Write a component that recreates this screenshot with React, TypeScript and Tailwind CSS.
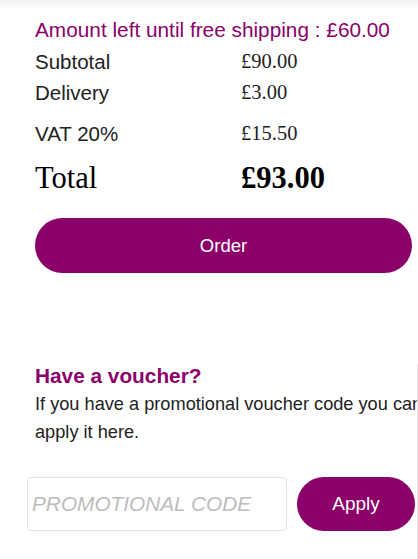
// App.tsx
// Basket summary with order button and voucher form
const rows = [
  { label: "Subtotal", value: "£90.00", extra: "mt-[2px]" },
  { label: "Delivery", value: "£3.00", extra: "" },
  { label: "VAT 20%", value: "£15.50", extra: "mt-[10px]" },
];

export default function App() {
  return (
    <div className="w-[418px] h-[559px] overflow-hidden bg-white font-['Liberation_Sans',Arial,sans-serif] text-[#222]">
      {/* faint shadow from the header above */}
      <div className="h-[10px] bg-gradient-to-b from-[#f2f2f2] to-white" />

      <div className="pl-[35px]">
        <div className="mt-[6px] text-[20.8px] leading-[28px] text-[#8b0069] whitespace-nowrap">
          Amount left until free shipping : £60.00
        </div>

        {rows.map((r) => (
          <div
            key={r.label}
            className={`grid grid-cols-[206px_1fr] h-[31px] leading-[31px] ${r.extra}`}
          >
            <span className="text-[20.5px]">{r.label}</span>
            <span className="font-['Liberation_Serif','Times_New_Roman',serif] text-[20.5px]">
              {r.value}
            </span>
          </div>
        ))}

        <div className="grid grid-cols-[206px_1fr] mt-[9px] h-[40px] leading-[40px] font-['Liberation_Serif','Times_New_Roman',serif] text-[30.5px] text-black">
          <span>Total</span>
          <span className="font-bold">£93.00</span>
        </div>

        <button
          type="button"
          className="mt-[20px] w-[377px] h-[55px] rounded-full bg-[#8b0069] text-white text-[18.5px]"
        >
          Order
        </button>
      </div>

      {/* Voucher panel, wider than the viewport and clipped at its edge */}
      <div className="mt-[91px] flex h-[200px]">
        <div className="w-[417px] overflow-hidden">
          <div className="w-[440px]">
            <div className="pl-[35px]">
              <h2 className="text-[20.8px] leading-[24px] font-bold text-[#8b0069]">
                Have a voucher?
              </h2>
              <p className="mt-[3px] w-[400px] text-[18.2px] leading-[27.6px] text-[#222]">
                If you have a promotional voucher code you can apply it here.
              </p>
            </div>
            <div className="mt-[31px] pl-[27px] flex gap-[10px]">
              <input
                type="text"
                placeholder="PROMOTIONAL CODE"
                className="w-[260px] h-[54px] rounded-[4px] border border-[#e3e3e3] px-[4px] text-[20.8px] italic placeholder:text-[#bdbdbd] outline-none"
              />
              <button
                type="button"
                className="w-[118px] h-[54px] rounded-full bg-[#8b0069] text-white text-[19px]"
              >
                Apply
              </button>
            </div>
          </div>
        </div>
        <div className="w-px bg-[#e4e4e4]" />
      </div>
    </div>
  );
}
